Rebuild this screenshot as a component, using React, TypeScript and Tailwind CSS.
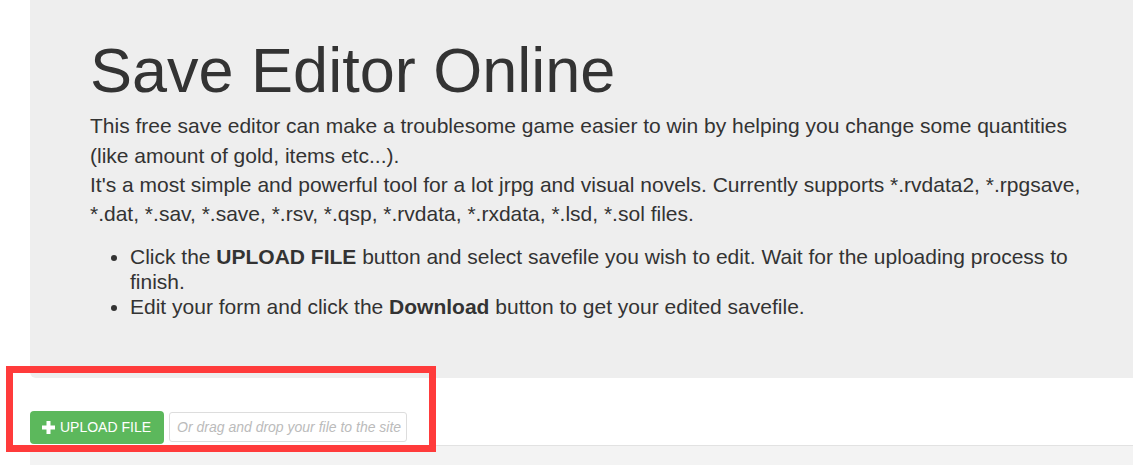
import React from 'react';

const PlusIcon = () => (
  <svg width="13" height="13" viewBox="0 0 13 13" className="shrink-0">
    <rect x="4.5" y="0" width="4" height="13" fill="white" />
    <rect x="0" y="4.5" width="13" height="4" fill="white" />
  </svg>
);

const App = () => {
  return (
    <div className="relative w-[1133px] h-[465px] overflow-hidden bg-white text-[#333] font-['Liberation_Sans',Arial,sans-serif]">
      <div className="ml-[30px]">
        <div className="w-[1170px] bg-[#eee] rounded-bl-md pt-[36px] pb-[59px] pl-[60px]">
          <div className="w-[1010px]">
            <h1 className="text-[63px] leading-[1.1] mb-[6px]">Save Editor Online</h1>
            <p className="text-[21px] leading-[29.3px] mb-[16px]">
              This free save editor can make a troublesome game easier to win by helping you change some quantities
              (like amount of gold, items etc...).
              <br />
              It's a most simple and powerful tool for a lot jrpg and visual novels. Currently supports *.rvdata2,
              *.rpgsave, *.dat, *.sav, *.save, *.rsv, *.qsp, *.rvdata, *.rxdata, *.lsd, *.sol files.
            </p>
            <ul className="list-disc pl-10 text-[21px] leading-[25px]">
              <li>
                Click the <b className="font-bold">UPLOAD FILE</b> button and select savefile you wish to edit. Wait for
                the uploading process to finish.
              </li>
              <li>
                Edit your form and click the <b className="font-bold">Download</b> button to get your edited savefile.
              </li>
            </ul>
          </div>
        </div>

        <div className="flex items-start pt-[33px] h-[67px]">
          <button className="flex items-center gap-[5px] h-[33px] pl-[12px] pr-[13px] rounded bg-[#5cb85c] text-white text-[14px]">
            <PlusIcon />
            UPLOAD FILE
          </button>
          <input
            type="text"
            placeholder="Or drag and drop your file to the site"
            className="ml-[5px] mt-[1px] w-[238px] h-[30px] border border-[#ddd] rounded-[3px] pl-[7px] text-[14px] outline-none placeholder:italic placeholder:text-[#bbb]"
          />
        </div>

        <div className="h-[20px] bg-[#f3f3f3] border-t border-[#e2e2e2] rounded-tl-sm" />
      </div>

      {/* highlight box */}
      <div className="absolute left-[6px] top-[366px] w-[430px] h-[86px] border-[7px] border-[#ff3b3b]" />
    </div>
  );
};

export default App;
